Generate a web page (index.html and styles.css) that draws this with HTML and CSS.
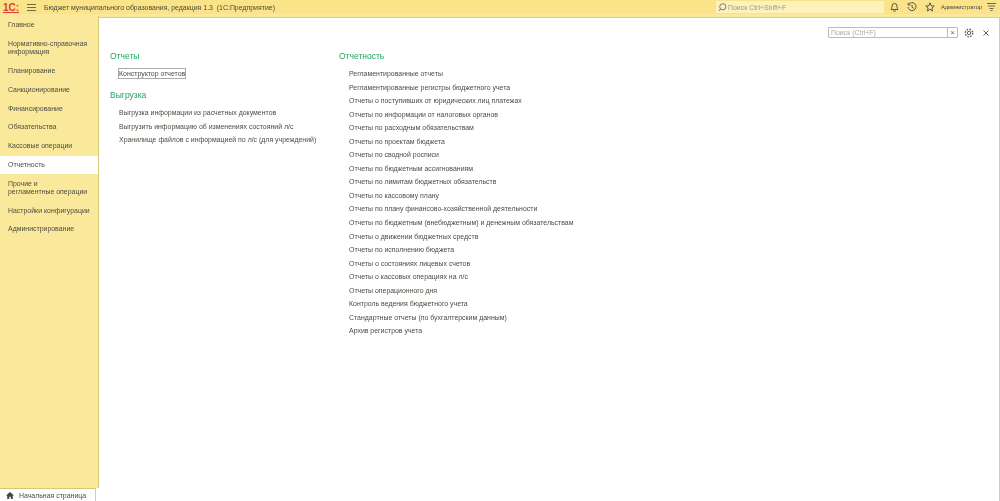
FILE: index.html
```html
<!DOCTYPE html>
<html lang="ru">
<head>
    <meta charset="UTF-8">
    <meta name="viewport" content="width=device-width, initial-scale=1.0">
    <title>Бюджет муниципального образования</title>
    <link rel="stylesheet" href="styles.css">
</head>
<body>
    <header class="topbar">
        <span class="logo">1С:</span>
        <svg class="burger" width="9" height="7" viewBox="0 0 9 7"><path d="M0 .5h9M0 3.5h9M0 6.5h9" stroke="#6b6b55" fill="none"/></svg>
        <span class="app-title">Бюджет муниципального образования, редакция 1.3 &nbsp;(1С:Предприятие)</span>
        <div class="global-search">
            <svg width="9" height="9" viewBox="0 0 9 9"><circle cx="4.8" cy="3.8" r="3.1" stroke="#777" fill="none"/><path d="M2.6 6 .8 8" stroke="#777" fill="none"/></svg>
            <span>Поиск Ctrl+Shift+F</span>
        </div>
        <svg class="tool" width="9" height="10" viewBox="0 0 9 10"><path d="M1 7.500c1-1 1-2.200 1-3.500a2.500 2.500 0 0 1 5 0c0 1.300 0 2.500 1 3.500zM3.500 8.500a1 1 0 0 0 2 0" stroke="#555" fill="none"/></svg>
        <svg class="tool" width="10" height="10" viewBox="0 0 10 10"><path d="M1.400 2.800A4 4 0 1 1 1 5M1.200 .9v2.100h2.100M5 2.800V5.300l1.700 1" stroke="#555" fill="none"/></svg>
        <svg class="tool" width="10" height="10" viewBox="0 0 10 10"><path d="M5 .8 6.200 3.800l3 .2-2.300 2 .8 3L5 7.300 2.300 9l.8-3L.8 4l3-.2z" stroke="#555" fill="none"/></svg>
        <span class="user">Администратор</span>
        <svg class="tool-menu" width="9" height="8" viewBox="0 0 9 8"><path d="M0 .5h9M1 3h7M2.500 5.500h4" stroke="#666" fill="none"/><path d="M3.500 7.500h2" stroke="#666" fill="none"/></svg>
    </header>

    <div class="workspace">
        <nav class="sidebar">
            <ul class="nav-list">
                <li>Главное</li>
                <li>Нормативно-справочная<br>информация</li>
                <li>Планирование</li>
                <li>Санкционирование</li>
                <li>Финансирование</li>
                <li>Обязательства</li>
                <li>Кассовые операции</li>
                <li class="active">Отчетность</li>
                <li>Прочие и<br>регламентные операции</li>
                <li>Настройки конфигурации</li>
                <li>Администрирование</li>
            </ul>
            <div class="home-tab">
                <svg width="8" height="7" viewBox="0 0 8 7"><path d="M4 0 0 3.500h1.200V7h2V4.800h1.600V7h2V3.500H8z" fill="#444"/></svg>
                <span>Начальная страница</span>
            </div>
        </nav>

        <main class="panel">
            <div class="panel-tools">
                <div class="search-box">
                    <span class="search-text">Поиск (Ctrl+F)</span>
                    <span class="search-clear">×</span>
                </div>
                <svg class="gear" width="10" height="10" viewBox="0 0 10 10"><circle cx="5" cy="5" r="1.700" stroke="#666" fill="none"/><circle cx="5" cy="5" r="3.700" stroke="#666" stroke-width="1.500" stroke-dasharray="1.600 1.300" fill="none"/></svg>
                <svg width="6" height="6" viewBox="0 0 6 6"><path d="M.5.500l5 5M5.500.500l-5 5" stroke="#666" fill="none"/></svg>
            </div>
            <div class="columns">
                <section class="col-left">
                    <h2>Отчеты</h2>
                    <ul class="links">
                        <li><span class="focused">Конструктор отчетов</span></li>
                    </ul>
                    <h2>Выгрузка</h2>
                    <ul class="links">
                        <li>Выгрузка информации из расчетных документов</li>
                        <li>Выгрузить информацию об изменениях состояний л/с</li>
                        <li>Хранилище файлов с информацией по л/с (для учреждений)</li>
                    </ul>
                </section>
                <section class="col-right">
                    <h2>Отчетность</h2>
                    <ul class="links">
                        <li>Регламентированные отчеты</li>
                        <li>Регламентированные регистры бюджетного учета</li>
                        <li>Отчеты о поступивших от юридических лиц платежах</li>
                        <li>Отчеты по информации от налоговых органов</li>
                        <li>Отчеты по расходным обязательствам</li>
                        <li>Отчеты по проектам бюджета</li>
                        <li>Отчеты по сводной росписи</li>
                        <li>Отчеты по бюджетным ассигнованиям</li>
                        <li>Отчеты по лимитам бюджетных обязательств</li>
                        <li>Отчеты по кассовому плану</li>
                        <li>Отчеты по плану финансово-хозяйственной деятельности</li>
                        <li>Отчеты по бюджетным (внебюджетным) и денежным обязательствам</li>
                        <li>Отчеты о движении бюджетных средств</li>
                        <li>Отчеты по исполнению бюджета</li>
                        <li>Отчеты о состояниях лицевых счетов</li>
                        <li>Отчеты о кассовых операциях на л/с</li>
                        <li>Отчеты операционного дня</li>
                        <li>Контроль ведения бюджетного учета</li>
                        <li>Стандартные отчеты (по бухгалтерским данным)</li>
                        <li>Архив регистров учета</li>
                    </ul>
                </section>
            </div>
        </main>
    </div>
</body>
</html>
```
FILE: styles.css
```css
* {
    box-sizing: border-box;
}

html, body {
    height: 100%;
}

body {
    margin: 0;
    overflow: hidden;
    display: flex;
    flex-direction: column;
    background-color: #fbe99b;
    font-family: "Liberation Sans", Arial, sans-serif;
    font-size: 6.95px;
    color: #4c4c44;
}

ul {
    list-style: none;
    margin: 0;
    padding: 0;
}

/* own layers, so the small text is smoothed in grey */
h2, .links, .nav-list, .app-title, .user, .home-tab span, .search-text, .global-search span {
    will-change: transform;
}

.topbar {
    height: 16px;
    flex: none;
    display: flex;
    align-items: center;
    background-color: #fbe38a;
    border-bottom: 2px solid #fbe99b;
    color: #4c4c3a;
}

.logo {
    width: 27px;
    padding-left: 3px;
    font-weight: bold;
    font-size: 10px;
    color: #e0402f;
    text-decoration: underline;
    text-decoration-thickness: 1px;
}

.burger {
    margin-right: 8px;
}

.app-title {
    flex: 1;
}

.global-search {
    width: 168px;
    height: 12px;
    margin-right: 2px;
    padding-left: 2px;
    display: flex;
    align-items: center;
    gap: 1px;
    background-color: #fdf2bd;
    color: #9a9a88;
}

.tool {
    margin: 0 4px;
}

.user {
    margin: 0 5px 0 2px;
    font-size: 5.7px;
    color: #444;
}

.tool-menu {
    margin-right: 4px;
}

.workspace {
    flex: 1;
    min-height: 0;
    display: flex;
}

.sidebar {
    width: 99px;
    flex: none;
    display: flex;
    flex-direction: column;
    border-right: 1px solid #d8c67a;
}

.nav-list {
    flex: 1;
}

.nav-list li {
    padding: 5.25px 8px;
    line-height: 8.25px;
    white-space: nowrap;
}

.nav-list li.active {
    background-color: #fff;
}

.home-tab {
    height: 13px;
    margin-right: 2px;
    padding-left: 6px;
    display: flex;
    align-items: center;
    gap: 5px;
    background-color: #fff;
    border-right: 1px solid #ccc;
    box-shadow: 3px 0 0 #fff;
    border-top: 1px solid #d8c67a;
}

.panel {
    flex: 1;
    margin-top: 1px;
    padding: 9px 10px 0 11px;
    background-color: #fff;
    border-top: 1px solid #ccc;
    border-right: 1px solid #ccc;
}

.panel-tools {
    display: flex;
    align-items: center;
    justify-content: flex-end;
    gap: 7px;
    height: 11px;
}

.search-box {
    width: 130px;
    height: 11px;
    display: flex;
    border: 1px solid #bbb;
    border-radius: 1px;
    color: #aaa;
}

.search-text {
    flex: 1;
    padding-left: 2px;
    line-height: 9px;
}

.search-clear {
    width: 10px;
    text-align: center;
    line-height: 9px;
    color: #555;
    border-left: 1px solid #bbb;
}

.gear {
    margin: 0 2px 0 -1px;
}

.columns {
    display: flex;
    margin-top: 12px;
}

.col-left {
    width: 229px;
}

.col-left .links {
    padding-left: 9px;
}

.col-right {
    flex: 1;
}

h2 {
    margin: 0;
    font-size: 8.5px;
    line-height: 12px;
    font-weight: normal;
    color: #1ea55f;
}

.links {
    padding: 5px 0 8px 10px;
}

.links li {
    height: 13.55px;
    line-height: 13.55px;
    white-space: nowrap;
}

.focused {
    padding: 1px 0;
    outline: 1px solid #aaa;
}
```
